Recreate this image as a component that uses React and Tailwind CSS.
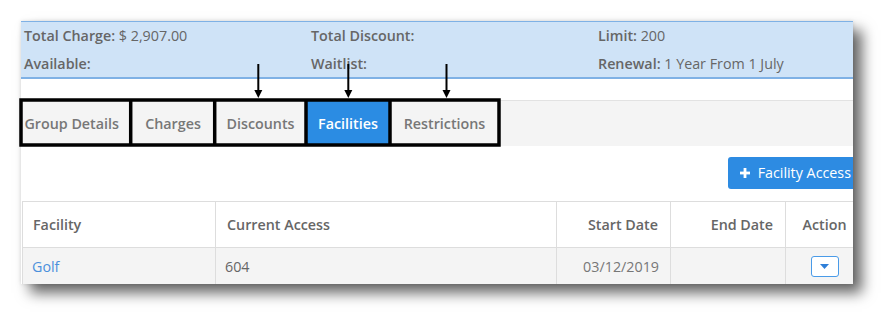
import React from "react";

const tabs = [
  { label: "Group Details", w: "w-[110px]", align: "justify-end pr-[12px]" },
  { label: "Charges", w: "w-[84px]", align: "justify-center" },
  { label: "Discounts", w: "w-[91px]", align: "justify-center" },
  { label: "Facilities", w: "w-[84px]", align: "justify-center", active: true },
  { label: "Restrictions", w: "w-[109px]", align: "justify-center" },
];

function Annotations() {
  const arrows = [258.3, 348.3, 446.5];
  return (
    <svg
      className="absolute left-0 top-0 pointer-events-none"
      width="895"
      height="327"
      viewBox="0 0 895 327"
    >
      {/* outline boxes round the tabs */}
      <rect x="21" y="100" width="478" height="45" fill="none" stroke="#000" strokeWidth="3.5" />
      {[130.7, 214.7, 306, 390].map((x) => (
        <line key={x} x1={x} y1="100" x2={x} y2="145" stroke="#000" strokeWidth="3.5" />
      ))}
      {arrows.map((x) => (
        <g key={x}>
          <line x1={x} y1="64" x2={x} y2="91" stroke="#000" strokeWidth="2" />
          <path d={`M${x - 4} 90 L${x + 4} 90 L${x} 98 Z`} fill="#000" />
        </g>
      ))}
    </svg>
  );
}

export default function App() {
  return (
    <div className="relative w-[895px] h-[327px] bg-white font-['Open_Sans',sans-serif] text-[14.3px]">
      <div className="absolute left-0 top-0 w-[895px] h-[327px] pt-[21px] pl-[21px]">
        <div className="w-[832px] h-[263px] overflow-hidden bg-white shadow-[0_0_4px_rgba(0,0,0,0.12),9px_9px_13px_rgba(0,0,0,0.6)]">
          {/* summary */}
          <div className="border-t border-b-2 border-[#7fb1e5] bg-[#cfe3f7] text-[#666] pl-[3px]">
            <div className="flex h-[27px] items-center">
              <div className="w-[287px] shrink-0"><span className="font-semibold">Total Charge:</span> $ 2,907.00</div>
              <div className="w-[287px] shrink-0"><span className="font-semibold">Total Discount:</span></div>
              <div className="w-[287px] shrink-0"><span className="font-semibold">Limit:</span> 200</div>
            </div>
            <div className="flex h-[28px] items-start pt-[4px]">
              <div className="w-[287px] shrink-0"><span className="font-semibold">Available:</span></div>
              <div className="w-[287px] shrink-0"><span className="font-semibold">Waitlist:</span></div>
              <div className="w-[287px] shrink-0"><span className="font-semibold">Renewal:</span> 1 Year From 1 July</div>
            </div>
          </div>

          {/* tabs */}
          <div className="mt-[21px] border-t border-[#e2e2e2] bg-[#f4f4f4] h-[46px] flex">
            {tabs.map((t) => (
              <div
                key={t.label}
                className={`${t.w} ${t.align} h-full flex items-center font-semibold ${
                  t.active ? "bg-[#2b8ce3] text-white" : "text-[#777]"
                }`}
              >
                {t.label}
              </div>
            ))}
          </div>

          {/* body */}
          <div className="w-[842px]">
            <div className="flex justify-end pt-[11px] pb-3">
              <button className="h-8 rounded-[3px] bg-[#2d8be2] text-white flex items-center gap-2 pl-3 pr-3">
                <svg width="10" height="10" viewBox="0 0 10 10">
                  <rect x="3.6" y="0" width="2.8" height="10" fill="#fff" />
                  <rect x="0" y="3.6" width="10" height="2.8" fill="#fff" />
                </svg>
                <span>Facility Access</span>
              </button>
            </div>
            <table className="ml-px w-[841px] table-fixed border-collapse text-[#666]">
              <colgroup>
                <col className="w-[193px]" />
                <col className="w-[341px]" />
                <col className="w-[114px]" />
                <col className="w-[115px]" />
                <col className="w-[78px]" />
              </colgroup>
              <thead>
                <tr className="h-[46px] bg-white font-semibold">
                  <th className="border border-[#ddd] text-left font-semibold px-[10px]">Facility</th>
                  <th className="border border-[#ddd] text-left font-semibold px-[11px]">Current Access</th>
                  <th className="border border-[#ddd] text-right font-semibold pr-3">Start Date</th>
                  <th className="border border-[#ddd] text-right font-semibold pr-3">End Date</th>
                  <th className="border border-[#ddd] text-center font-semibold">Action</th>
                </tr>
              </thead>
              <tbody>
                <tr className="h-[37px] bg-[#f4f4f4]">
                  <td className="border-x border-[#ddd] px-[9px] text-[#4b90dc]">Golf</td>
                  <td className="border-x border-[#ddd] px-[9px]">604</td>
                  <td className="border-x border-[#ddd] text-right pr-[11px] text-[#777]">03/12/2019</td>
                  <td className="border-x border-[#ddd]"></td>
                  <td className="border-x border-[#ddd]">
                    <div className="flex justify-center">
                      <span className="w-7 h-[21px] rounded-[3px] border border-[#4a9be8] bg-white flex items-center justify-center">
                        <svg width="9" height="5" viewBox="0 0 9 5">
                          <path d="M0 0 L9 0 L4.5 5 Z" fill="#2f7fd8" />
                        </svg>
                      </span>
                    </div>
                  </td>
                </tr>
              </tbody>
            </table>
          </div>
        </div>
      </div>
      <Annotations />
    </div>
  );
}
